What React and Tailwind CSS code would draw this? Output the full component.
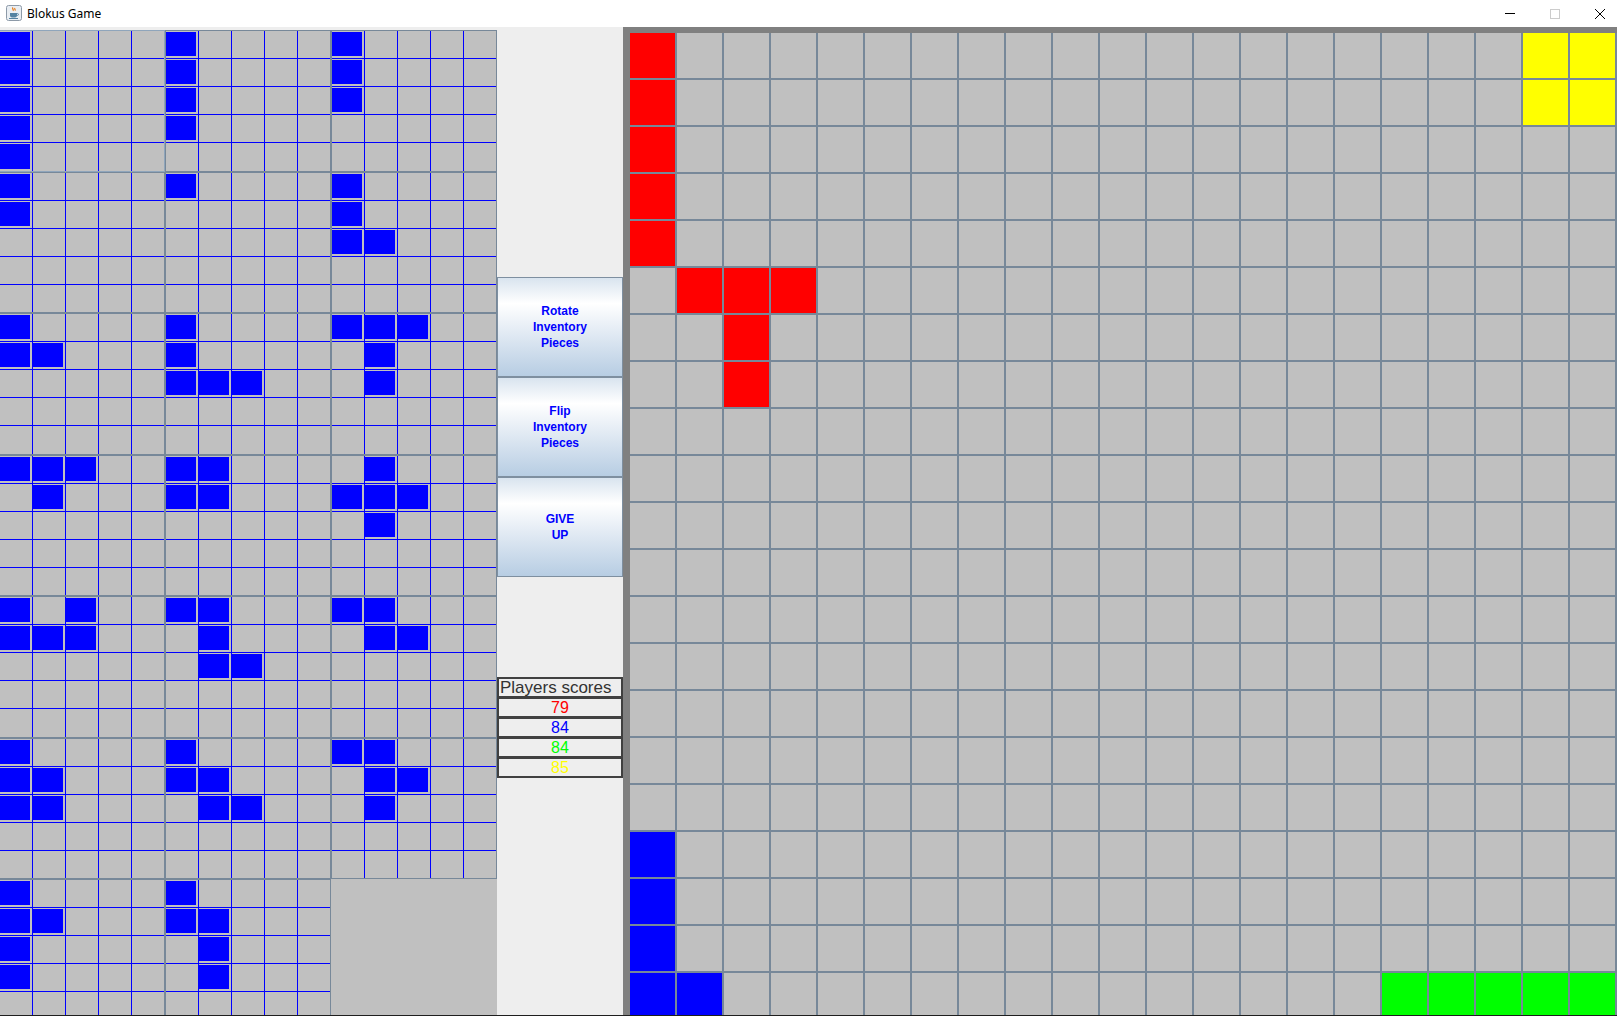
import React from 'react'

// inventory pieces still held by blue, drawn as little 5x5 grids
const pieces = [
  ['X', 'X', 'X', 'X', 'X'],
  ['X', 'X', 'X', 'X'],
  ['X', 'X', 'X'],
  ['X', 'X'],
  ['X'],
  ['X.', 'X.', 'XX'],
  ['X.', 'XX'],
  ['X..', 'X..', 'XXX'],
  ['XXX', '.X.', '.X.'],
  ['XXX', '.X.'],
  ['XX', 'XX'],
  ['.X.', 'XXX', '.X.'],
  ['X.X', 'XXX'],
  ['XX.', '.X.', '.XX'],
  ['XX.', '.XX'],
  ['X.', 'XX', 'XX'],
  ['X..', 'XX.', '.XX'],
  ['XX.', '.XX', '.X.'],
  ['X.', 'XX', 'X.', 'X.'],
  ['X.', 'XX', '.X', '.X'],
]

const BOARD_SIZE = 21

const boardColors = {}
const put = (cells, color) => cells.forEach(([r, c]) => { boardColors[`${r}-${c}`] = color })
put([[0, 0], [1, 0], [2, 0], [3, 0], [4, 0], [5, 1], [5, 2], [5, 3], [6, 2], [7, 2]], 'bg-[#ff0000]')
put([[0, 19], [0, 20], [1, 19], [1, 20]], 'bg-[#ffff00]')
put([[17, 0], [18, 0], [19, 0], [20, 0], [20, 1]], 'bg-[#0000ff]')
put([[20, 16], [20, 17], [20, 18], [20, 19], [20, 20]], 'bg-[#00ff00]')

const scores = [
  { value: 79, color: 'text-[#ff0000]' },
  { value: 84, color: 'text-[#0000ff]' },
  { value: 84, color: 'text-[#00ff00]' },
  { value: 85, color: 'text-[#ffff00]' },
]

const JavaIcon = () => (
  <svg width="16" height="16" viewBox="0 0 16 16">
    <rect x="0.5" y="0.5" width="15" height="15" rx="2" fill="#e9eef3" stroke="#8d9aa8" />
    <path d="M7 2.5c-1.5 1.2 1.2 2 0 3.4M9 3.2c-1 .9.8 1.4 0 2.4" stroke="#e76f00" strokeWidth="1.1" fill="none" />
    <path d="M4 8h7v2.5c0 1.2-1 2-2 2H6c-1 0-2-.8-2-2z" fill="#5382a1" />
    <path d="M11 8.6h.8c.9 0 .9 1.8 0 1.8H11" stroke="#5382a1" strokeWidth="0.9" fill="none" />
    <rect x="3" y="13" width="9" height="1" fill="#5382a1" />
  </svg>
)

const PiecePanel = ({ shape, selected }) => (
  <div
    className={`border ${selected ? 'border-[#8fa5bb] shadow-[inset_0_0_0_1px_#c4d5e6]' : 'border-[#778899]'} h-full`}
  >
    <div className="grid grid-cols-5 grid-rows-5 gap-px bg-[#0000ff] h-full">
      {Array.from({ length: 25 }, (_, i) => {
        const r = Math.floor(i / 5)
        const c = i % 5
        const on = shape[r] && shape[r][c] === 'X'
        return (
          <div key={i} className="bg-[#c0c0c0] flex">
            {on && <div className="flex-1 bg-[#0000ff] mr-[2px] mb-[2px] mt-px" />}
          </div>
        )
      })}
    </div>
  </div>
)

const SideButton = ({ lines }) => (
  <div className="h-[100px] border border-[#7e8fa0] bg-[linear-gradient(to_bottom,#d9e4ef_0%,#ffffff_26%,#e3ebf4_55%,#b7cde3_100%)] flex items-center justify-center">
    <div className="text-center text-[12px] leading-[16px] font-bold text-[#0000ff] font-['Liberation_Sans',Arial,sans-serif]">
      {lines.map(l => <div key={l}>{l}</div>)}
    </div>
  </div>
)

export default function App() {
  return (
    <div className="w-[1617px] h-[1016px] overflow-hidden flex flex-col bg-white font-['Liberation_Sans',Arial,sans-serif]">
      {/* title bar */}
      <div className="h-[27px] shrink-0 flex items-center bg-white">
        <div className="ml-[6px] mb-px">
          <JavaIcon />
        </div>
        <span className="ml-[5px] text-[12px] text-black font-['Noto_Sans',sans-serif]">Blokus Game</span>
        <div className="ml-auto flex items-center gap-[35px] pr-[12px]">
          <div className="w-[10px] h-px bg-black" />
          <div className="w-[10px] h-[10px] border border-[#cccccc]" />
          <svg width="10" height="10" viewBox="0 0 10 10">
            <path d="M0 0L10 10M10 0L0 10" stroke="#000" strokeWidth="1" />
          </svg>
        </div>
      </div>

      {/* body */}
      <div className="flex-1 flex min-h-0 bg-[#eeeeee] border-b border-[#1e1e1e]">
        {/* inventory */}
        <div className="w-[497px] shrink-0 pt-[3px] overflow-hidden">
          <div className="-ml-px w-[498px] h-full bg-[#c0c0c0] grid grid-cols-3 auto-rows-[141.5px] overflow-hidden">
            {pieces.map((p, i) => (
              <PiecePanel key={i} shape={p} selected={i === 0} />
            ))}
          </div>
        </div>

        {/* controls */}
        <div className="w-[126px] shrink-0 flex flex-col">
          <div className="mt-[250px] flex flex-col">
            <SideButton lines={['Rotate', 'Inventory', 'Pieces']} />
            <SideButton lines={['Flip', 'Inventory', 'Pieces']} />
            <SideButton lines={['GIVE', 'UP']} />
          </div>
          <div className="mt-[100px] border-2 border-[#404040] bg-[#404040] flex flex-col gap-[3px]">
            <div className="h-[17px] bg-[#eeeeee] text-[17px] leading-[17px] text-[#333333] pl-px whitespace-nowrap overflow-hidden">
              Players scores
            </div>
            {scores.map((s, i) => (
              <div key={i} className={`h-[17px] bg-[#eeeeee] text-[16px] leading-[17px] text-center ${s.color}`}>
                {s.value}
              </div>
            ))}
          </div>
        </div>

        {/* board */}
        <div className="flex-1 bg-[#808080] pl-[7px] pt-[6px] overflow-hidden">
          <div className="w-max grid grid-cols-[repeat(21,45px)] auto-rows-[45px] gap-[2px] bg-[#778899] pr-[2px] pb-[2px]">
            {Array.from({ length: BOARD_SIZE * BOARD_SIZE }, (_, i) => {
              const r = Math.floor(i / BOARD_SIZE)
              const c = i % BOARD_SIZE
              return <div key={i} className={boardColors[`${r}-${c}`] || 'bg-[#c0c0c0]'} />
            })}
          </div>
        </div>
      </div>
    </div>
  )
}
